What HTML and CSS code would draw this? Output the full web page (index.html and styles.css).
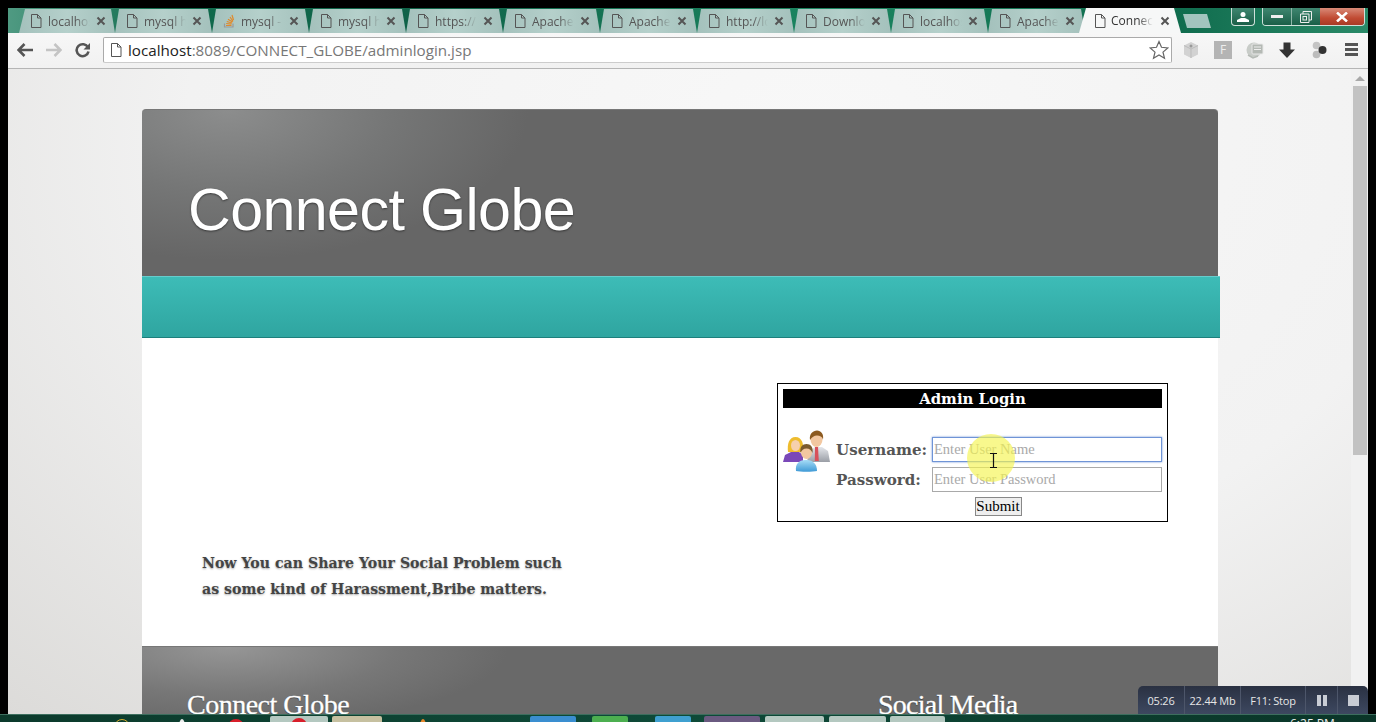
FILE: index.html
```html
<!DOCTYPE html>
<html lang="en">

<head>
    <meta charset="UTF-8">
    <title>Connect Globe</title>
    <link rel="stylesheet" href="styles.css">
</head>

<body>

    <svg class="defs" width="0" height="0">
        <symbol id="doc" viewBox="0 0 12 14">
            <path d="M1.500 .5h6l3.500 3.500v9.500h-9.500z M7.500 .5v3.500h3.500" fill="none" stroke="#555" stroke-width="1"/>
        </symbol>
        <symbol id="cross" viewBox="0 0 10 10">
            <path d="M1.500 1.500l7 7M8.500 1.500l-7 7" fill="none" stroke="#555" stroke-width="2"/>
        </symbol>
    </svg>

    <div class="screen">

        <!-- Browser tabs -->
        <div class="tab-strip">
            <div class="tab tab-first"><svg class="tab-icon"><use href="#doc"/></svg><span class="tab-title">localhos</span><svg class="tab-close"><use href="#cross"/></svg></div>
            <div class="tab"><svg class="tab-icon"><use href="#doc"/></svg><span class="tab-title">mysql h</span><svg class="tab-close"><use href="#cross"/></svg></div>
            <div class="tab">
                <svg class="tab-icon" viewBox="0 0 12 14"><path d="M1.500 9.500v3.500h8.500v-3.500" fill="none" stroke="#999" stroke-width="1.200"/><path d="M3 11.500h5.500M3.200 9.500l5.300.6M3.800 7.500l5.200 1.500M5 5.200l4.500 2.800M7 3l3 4.300M9 1l1.500 5" fill="none" stroke="#e08a2c" stroke-width="1.200"/></svg>
                <span class="tab-title">mysql -</span><svg class="tab-close"><use href="#cross"/></svg>
            </div>
            <div class="tab"><svg class="tab-icon"><use href="#doc"/></svg><span class="tab-title">mysql h</span><svg class="tab-close"><use href="#cross"/></svg></div>
            <div class="tab"><svg class="tab-icon"><use href="#doc"/></svg><span class="tab-title">https://</span><svg class="tab-close"><use href="#cross"/></svg></div>
            <div class="tab"><svg class="tab-icon"><use href="#doc"/></svg><span class="tab-title">Apache</span><svg class="tab-close"><use href="#cross"/></svg></div>
            <div class="tab"><svg class="tab-icon"><use href="#doc"/></svg><span class="tab-title">Apache</span><svg class="tab-close"><use href="#cross"/></svg></div>
            <div class="tab"><svg class="tab-icon"><use href="#doc"/></svg><span class="tab-title">http://lo</span><svg class="tab-close"><use href="#cross"/></svg></div>
            <div class="tab"><svg class="tab-icon"><use href="#doc"/></svg><span class="tab-title">Downlo</span><svg class="tab-close"><use href="#cross"/></svg></div>
            <div class="tab"><svg class="tab-icon"><use href="#doc"/></svg><span class="tab-title">localhos</span><svg class="tab-close"><use href="#cross"/></svg></div>
            <div class="tab"><svg class="tab-icon"><use href="#doc"/></svg><span class="tab-title">Apache</span><svg class="tab-close"><use href="#cross"/></svg></div>
            <div class="tab tab-active"><svg class="tab-icon"><use href="#doc"/></svg><span class="tab-title">Connect</span><svg class="tab-close"><use href="#cross"/></svg></div>
            <div class="new-tab"></div>

            <!-- Window buttons -->
            <div class="win-user">
                <svg width="12" height="10" viewBox="0 0 12 10"><circle cx="6" cy="2.500" r="2.500" fill="#fff"/><path d="M0 10v-2l4-2h4l4 2v2z" fill="#fff"/></svg>
            </div>
            <div class="win-group">
                <div class="win-btn win-min"><span class="min-bar"></span></div>
                <div class="win-btn win-max">
                    <svg width="12" height="12" viewBox="0 0 12 12"><path d="M3 3v-2.500h8.500v8.500h-2.500M.5 3h8.500v8.500h-8.500z" fill="none" stroke="#eee" stroke-width="1"/><rect x="3" y="5.500" width="3.500" height="3.500" fill="none" stroke="#eee"/></svg>
                </div>
                <div class="win-btn win-close">
                    <svg width="14" height="10" viewBox="0 0 14 10"><path d="M2 .5l10 9M12 .5l-10 9" stroke="#fff" stroke-width="2.500"/></svg>
                </div>
            </div>
        </div>

        <!-- Address bar -->
        <div class="toolbar">
            <svg class="nav-icon" viewBox="0 0 16 14"><path d="M7.500 1l-6 6 6 6M2 7h14" fill="none" stroke="#555" stroke-width="2.600"/></svg>
            <svg class="nav-icon" viewBox="0 0 16 14"><path d="M8.500 1l6 6-6 6M14 7h-14" fill="none" stroke="#c4c4c4" stroke-width="2.600"/></svg>
            <svg class="nav-icon" viewBox="0 0 16 16"><path d="M13 5.500a6 6 0 1 0 .5 4" fill="none" stroke="#555" stroke-width="2.600"/><path d="M15 1v6.500h-6.500z" fill="#555"/></svg>
            <div class="omnibox">
                <svg class="omni-doc"><use href="#doc"/></svg>
                <span class="url"><b class="url-host">localhost</b>:8089/CONNECT_GLOBE/adminlogin.jsp</span>
                <svg class="star" viewBox="0 0 20 20"><path d="M10 1.500l2.500 5.800 6.300.6-4.800 4.200 1.500 6.200-5.500-3.300-5.500 3.300 1.500-6.200-4.800-4.200 6.300-.6z" fill="#fff" stroke="#666" stroke-width="1.200"/></svg>
            </div>
            <div class="ext-row">
                <svg class="ext" viewBox="0 0 18 18"><path d="M9 1l7 3.500v9l-7 3.500-7-3.500v-9z" fill="#d2d2d2"/><path d="M2 4.500l7 3.500 7-3.500M9 8v9" fill="none" stroke="#bbb"/><circle cx="9" cy="5" r="1.500" fill="#999"/></svg>
                <span class="ext-f">F</span>
                <svg class="ext" viewBox="0 0 18 18"><circle cx="8" cy="9" r="7.500" fill="#c8ccc8"/><rect x="6" y="3" width="11" height="10" rx="1" fill="#b4b9b4" stroke="#e8e8e8"/><path d="M8 6h7M8 8.500h7" stroke="#eee"/><path d="M2 14l5 3 5-2" fill="none" stroke="#b5bab5" stroke-width="1.500"/></svg>
                <svg class="ext" viewBox="0 0 18 18"><path d="M5.500 1.500h7v7h4.500l-8 8.500-8-8.500h4.500z" fill="#333"/></svg>
                <svg class="ext" viewBox="0 0 18 18"><circle cx="6.500" cy="4.500" r="3.800" fill="#c4c4c4"/><circle cx="6.500" cy="13.500" r="3.800" fill="#bcbcbc"/><circle cx="12.500" cy="9" r="4" fill="#333"/></svg>
                <span class="menu-icon"><i></i><i></i><i></i></span>
            </div>
        </div>

        <!-- Page area -->
        <div class="viewport">
            <div class="page">
                <div class="card">
                    <div class="banner">
                        <h1 class="site-title">Connect Globe</h1>
                    </div>
                    <div class="teal-bar"></div>
                    <div class="content">
                        <div class="login-row">
                            <div class="login-box">
                                <div class="login-head">Admin Login</div>
                                <form class="login-form">
                                    <svg class="people" viewBox="0 0 48 42">
                                        <defs>
                                            <linearGradient id="suit" x1="0" y1="0" x2="0" y2="1"><stop offset="0" stop-color="#e4e6ea"/><stop offset="1" stop-color="#9a9ea6"/></linearGradient>
                                            <linearGradient id="kid" x1="0" y1="0" x2="0" y2="1"><stop offset="0" stop-color="#a6dcf6"/><stop offset="1" stop-color="#3f9ad6"/></linearGradient>
                                        </defs>
                                        <path d="M24 32l2-11 6-4h7l6 4 2 11z" fill="url(#suit)"/>
                                        <path d="M32 17h3l.8 14h-4z" fill="#d8505a"/>
                                        <ellipse cx="33.500" cy="9.500" rx="6" ry="7.500" fill="#f2c7a0"/>
                                        <path d="M27 10c-1-6 3-9.500 7-9.500s7 3.500 6 9c-1-3-3-4-6-4s-5 1.500-7 4.500z" fill="#8c5a20"/>
                                        <path d="M0 32l2-7 6-3h8l4 3v7z" fill="#7a48b8"/>
                                        <path d="M5 22c-1-8 1-15 7.500-15s8.500 7 7.500 15z" fill="#eebc2e"/>
                                        <ellipse cx="12.500" cy="15.500" rx="4.500" ry="5.500" fill="#f6d0ac"/>
                                        <path d="M13 41c-1-7 3-11 9-11h2c6 0 10 4 10 11-4 1-17 1-21 0z" fill="url(#kid)"/>
                                        <ellipse cx="23.500" cy="22.500" rx="5.500" ry="6.500" fill="#f2c7a0"/>
                                        <path d="M17.500 23c-1-6 2-9 6-9s7 3 6 9c-1-2.500-3-4.500-6-4.500s-5 2-6 4.500z" fill="#7c5c30"/>
                                    </svg>
                                    <div class="fields">
                                        <div class="field-row">
                                            <label class="field-label" for="username">Username:</label>
                                            <input class="field-input field-focus" id="username" type="text" placeholder="Enter User Name">
                                        </div>
                                        <div class="field-row">
                                            <label class="field-label" for="password">Password:</label>
                                            <input class="field-input" id="password" type="password" placeholder="Enter User Password">
                                        </div>
                                        <div class="submit-row">
                                            <button class="submit-btn" type="button">Submit</button>
                                        </div>
                                    </div>
                                </form>
                            </div>
                        </div>
                        <p class="tagline">Now You can Share Your Social Problem such<br>as some kind of Harassment,Bribe matters.</p>
                    </div>
                    <div class="footer">
                        <h2 class="footer-title">Connect Globe</h2>
                        <h2 class="footer-title footer-social">Social Media</h2>
                    </div>
                </div>
            </div>
            <div class="scrollbar">
                <span class="scroll-up"></span>
                <span class="scroll-thumb"></span>
            </div>
        </div>

        <!-- Windows taskbar, only its top edge is on screen -->
        <div class="taskbar">
            <span class="task-dot dot-yellow"></span>
            <span class="task-dot dot-white"></span>
            <span class="task-dot dot-red"></span>
            <span class="task-btn task-first"><span class="task-dot dot-red"></span></span>
            <span class="task-btn task-narrow"></span>
            <span class="task-dot dot-orange"></span>
            <span class="task-btn task-blue"></span>
            <span class="task-btn task-green"></span>
            <span class="task-btn task-sky"></span>
            <span class="task-btn task-purple"></span>
            <span class="task-btn task-grey1"></span>
            <span class="task-btn task-grey2"></span>
            <span class="task-btn task-grey3"></span>
            <span class="task-clock">6:25 PM</span>
        </div>

        <!-- Mouse pointer highlight of the screen recorder -->
        <span class="pointer-glow"></span>
        <svg class="pointer-beam" width="9" height="15" viewBox="0 0 9 15"><path d="M1 .5h7M4.500 .5v14M1 14.500h7" stroke="#111" stroke-width="1.200" fill="none"/></svg>

        <!-- Screen recorder panel -->
        <div class="recorder">
            <span class="rec-cell rec-time">05:26</span>
            <span class="rec-cell rec-size">22.44 Mb</span>
            <span class="rec-cell rec-key">F11: Stop</span>
            <span class="rec-cell rec-icon"><span class="rec-pause"></span></span>
            <span class="rec-cell rec-last"><span class="rec-stop"></span></span>
        </div>
    </div>
</body>

</html>
```

FILE: styles.css
```css
html, body {
    margin: 0;
    padding: 0;
    height: 100%;
    overflow: hidden;
    background: #000;
}

.defs {
    position: absolute;
}

.screen {
    position: relative;
    display: flex;
    flex-direction: column;
    height: 722px;
    padding: 8px 8px 0 8px;
    box-sizing: border-box;
    font-family: "Open Sans", "Liberation Sans", sans-serif;
}

/* Tabs */
.tab-strip {
    display: flex;
    align-items: flex-end;
    height: 25px;
    padding-left: 11px;
    background: linear-gradient(90deg, #4f9a82 0%, #0f6a4c 12%, #0f6248 30%, #1b8560 60%, #0e6a4c 85%, #2a8a68 100%);
    flex: none;
}

.tab {
    display: flex;
    align-items: center;
    width: 97px;
    height: 24px;
    flex: none;
    box-sizing: border-box;
    padding-left: 11px;
    clip-path: polygon(0 100%, 4px 0, 93px 0, 97px 100%);
    background: linear-gradient(90deg, #a4c1bc, #b5d0cb 50%, #a4c1bc);
}

.tab-first {
    width: 96px;
    clip-path: polygon(0 100%, 6px 0, 92px 0, 96px 100%);
}

.tab-icon {
    width: 12px;
    height: 14px;
    flex: none;
}

.tab-title {
    width: 44px;
    margin-left: 6px;
    white-space: nowrap;
    font-size: 12px;
    color: #555;
    -webkit-mask-image: linear-gradient(90deg, #000 62%, transparent 95%);
    mask-image: linear-gradient(90deg, #000 62%, transparent 95%);
}

.tab-close {
    width: 10px;
    height: 10px;
    margin-left: 4px;
    flex: none;
}

.tab-active {
    position: relative;
    width: 102px;
    height: 25px;
    margin-left: -6px;
    padding-left: 15px;
    clip-path: polygon(0 100%, 7px 0, 95px 0, 102px 100%);
    background: #f6f7f7;
}

.tab-active .tab-title {
    margin-left: 5px;
    color: #333;
}

.tab-active .tab-close {
    margin-left: 5px;
}

.new-tab {
    width: 28px;
    height: 14px;
    margin: 0 20px 5px 2px;
    flex: none;
    clip-path: polygon(0 0, 24px 0, 28px 100%, 4px 100%);
    background: #a3c4be;
}

.win-user {
    display: flex;
    align-items: center;
    justify-content: center;
    align-self: flex-start;
    width: 24px;
    height: 18px;
    margin-right: 7px;
    border: 1px solid #cfe0da;
    border-top: 0;
    border-radius: 0 0 4px 4px;
    box-sizing: border-box;
    background: linear-gradient(#3f8670, #1a5f48);
}

.win-group {
    display: flex;
    align-self: flex-start;
    width: 103px;
    height: 18px;
    border: 1px solid #cfe0da;
    border-top: 0;
    border-radius: 0 0 4px 4px;
    box-sizing: border-box;
    overflow: hidden;
}

.win-btn {
    display: flex;
    align-items: center;
    justify-content: center;
    width: 28px;
    flex: none;
    background: linear-gradient(#3f8670, #1a5f48);
}

.win-min {
    border-right: 1px solid #8fb8aa;
}

.win-close {
    flex: 1;
    background: linear-gradient(#d98a78, #c04a32 60%, #a83a26);
}

.min-bar {
    width: 12px;
    height: 3px;
    background: #eee;
}

/* Address bar */
.toolbar {
    display: flex;
    align-items: center;
    flex: none;
    height: 36px;
    padding: 0 0 2px 9px;
    box-sizing: border-box;
    background: linear-gradient(#f7f7f7, #f1f1f1);
    border-bottom: 1px solid #b5b5b5;
}

.nav-icon {
    width: 16px;
    height: 16px;
    margin-right: 13px;
    flex: none;
}

.omnibox {
    display: flex;
    align-items: center;
    width: 1069px;
    height: 26px;
    margin-left: -1px;
    padding: 0 2px 0 6px;
    box-sizing: border-box;
    flex: none;
    background: #fff;
    border: 1px solid #aaa;
    border-bottom-color: #ccc;
    border-radius: 2px;
}

.omni-doc {
    width: 12px;
    height: 14px;
    flex: none;
}

.url {
    margin-left: 6px;
    flex: 1;
    font-size: 15.200px;
    color: #777;
    white-space: nowrap;
}

.url-host {
    font-weight: normal;
    color: #222;
}

.star {
    width: 20px;
    height: 20px;
    flex: none;
}

.ext-row {
    display: flex;
    align-items: center;
    gap: 14px;
    margin-left: 10px;
}

.ext {
    width: 18px;
    height: 18px;
    flex: none;
}

.ext-f {
    display: flex;
    align-items: center;
    justify-content: center;
    width: 18px;
    height: 18px;
    background: #b4b4b4;
    color: #eee;
    font-size: 12px;
    flex: none;
}

.menu-icon {
    display: flex;
    flex-direction: column;
    gap: 2px;
    width: 13px;
    margin-left: 3px;
}

.menu-icon i {
    display: block;
    height: 3px;
    background: #555;
}

/* Page */
.viewport {
    display: flex;
    flex: 1;
    min-height: 0;
    overflow: hidden;
}

.page {
    flex: 1;
    padding: 40px 0 0 134px;
    overflow: hidden;
    background: radial-gradient(ellipse at 60% 10%, #f8f8f8 0%, #f2f2f2 55%, #dcdbd9 100%);
}

.card {
    width: 1076px;
}

.banner {
    display: flex;
    align-items: center;
    height: 167px;
    padding: 32px 0 0 46px;
    box-sizing: border-box;
    border-radius: 4px 4px 0 0;
    background: radial-gradient(ellipse 300px 150px at 8% 0%, #8c8d8d 0%, #757676 55%, #666 100%);
    border-top: 1px solid #777;
}

.site-title {
    margin: 0;
    font-family: "Liberation Sans", Arial, sans-serif;
    font-weight: normal;
    font-size: 59.200px;
    letter-spacing: -.6px;
    color: #fff;
    text-shadow: 0 1px 2px rgba(0, 0, 0, .5);
}

.teal-bar {
    width: 1078px;
    height: 62px;
    box-sizing: border-box;
    background: linear-gradient(#3dbcb7, #2fa5a0);
    border-top: 1px solid #6cc;
    border-bottom: 1px solid #1d7f7c;
}

.content {
    height: 308px;
    box-sizing: border-box;
    padding-top: 45px;
    background: #fff;
}

.login-row {
    display: flex;
    justify-content: flex-end;
    padding-right: 50px;
}

.login-box {
    width: 391px;
    height: 139px;
    box-sizing: border-box;
    padding: 5px;
    border: 1px solid #000;
    font-family: "Liberation Serif", serif;
}

.login-head {
    height: 19px;
    line-height: 20px;
    background: #000;
    color: #fff;
    font-family: "DejaVu Serif", serif;
    font-weight: bold;
    font-size: 14.900px;
    text-align: center;
}

.login-form {
    display: flex;
    margin-top: 23px;
}

.people {
    width: 48px;
    height: 42px;
    margin-top: -1px;
    flex: none;
}

.fields {
    flex: 1;
    margin-left: 5px;
    margin-top: 6px;
}

.field-row {
    display: flex;
    align-items: center;
    height: 25px;
    margin-bottom: 5px;
}

.field-label {
    width: 96px;
    flex: none;
    font-family: "DejaVu Serif", serif;
    font-weight: bold;
    font-size: 15.100px;
    color: #555;
}

.field-input {
    width: 230px;
    height: 25px;
    padding: 0 1px;
    box-sizing: border-box;
    border: 1px solid #a9a9a9;
    outline: none;
    font-family: "Liberation Serif", serif;
    font-size: 14.500px;
}

.field-input::placeholder {
    color: #a9a9a9;
}

.field-focus {
    border: 1px solid #6f94d6;
    box-shadow: 0 0 2px #6f94d6;
}

.submit-row {
    display: flex;
    justify-content: center;
    padding-right: 2px;
}

.submit-btn {
    height: 19px;
    width: 47px;
    padding: 0;
    border: 1px solid #888;
    background: #eee;
    color: #000;
    font-family: "Liberation Serif", serif;
    font-size: 15px;
    line-height: 15px;
}

.tagline {
    margin: 28px 0 0 60px;
    font-family: "DejaVu Serif", serif;
    font-weight: bold;
    font-size: 14.150px;
    line-height: 26px;
    color: #444;
    text-shadow: 0 1px 2px rgba(0, 0, 0, .35);
}

.footer {
    display: flex;
    height: 100px;
    padding: 42px 0 0 45px;
    box-sizing: border-box;
    border-top: 1px solid #777;
    background: radial-gradient(ellipse 280px 80px at 8% 0%, #969696 0%, #777 60%, #696969 100%);
}

.footer-title {
    width: 691px;
    flex: none;
    margin: 0;
    font-family: "Liberation Serif", serif;
    font-weight: normal;
    font-size: 28px;
    letter-spacing: -.5px;
    color: #fff;
    -webkit-text-stroke: .3px #fff;
    text-shadow: 0 1px 1px rgba(0, 0, 0, .4);
}

.footer-social {
    width: 300px;
    letter-spacing: -.75px;
}

.scrollbar {
    display: flex;
    flex-direction: column;
    align-items: center;
    width: 17px;
    flex: none;
    background: #f1f1f1;
}

.scroll-up {
    width: 0;
    height: 0;
    margin: 7px 0 5px;
    border-left: 5px solid transparent;
    border-right: 5px solid transparent;
    border-bottom: 5px solid #a8a8a8;
}

.scroll-thumb {
    width: 14px;
    height: 369px;
    background: #c2c2c2;
}

/* Taskbar */
.taskbar {
    position: relative;
    display: flex;
    flex: none;
    height: 8px;
    margin: 0 -8px;
    overflow: hidden;
    background: linear-gradient(90deg, #0c3a2c, #0e4a38 50%, #0a3528);
    border-top: 1px solid #3d6e5e;
    box-sizing: border-box;
}

.task-btn {
    position: absolute;
    top: 1px;
    display: block;
    height: 10px;
    background: #b4c8c0;
    border-radius: 2px 2px 0 0;
}

.task-first { left: 270px; width: 58px; }
.task-narrow { left: 332px; width: 50px; background: #c6c0a0; }
.task-blue { left: 530px; width: 46px; background: #3a8ed0; }
.task-green { left: 592px; width: 36px; background: #4caf50; }
.task-sky { left: 655px; width: 36px; background: #3fa0d0; }
.task-purple { left: 704px; width: 56px; background: #6a5a80; }
.task-grey1 { left: 765px; width: 59px; }
.task-grey2 { left: 829px; width: 57px; }
.task-grey3 { left: 890px; width: 55px; }

.task-dot {
    position: absolute;
    top: 4px;
    width: 16px;
    height: 16px;
    border-radius: 50%;
}

.dot-yellow { left: 114px; border: 1px solid #d8b030; box-sizing: border-box; }
.dot-white { left: 179px; width: 6px; background: #eee; }
.dot-red { left: 228px; background: #d81e2a; }
.task-first .dot-red { left: 21px; top: 2px; }
.dot-orange { left: 420px; width: 6px; background: #e8862a; }

.task-clock {
    position: absolute;
    top: 2px;
    left: 1290px;
    font-size: 12px;
    line-height: 14px;
    color: #eee;
}

/* Things on top of the page */
.pointer-glow {
    position: absolute;
    left: 967px;
    top: 434px;
    width: 48px;
    height: 48px;
    border-radius: 50%;
    background: rgba(244, 244, 80, .65);
}

.pointer-beam {
    position: absolute;
    left: 989px;
    top: 453px;
}

.recorder {
    position: absolute;
    right: 8px;
    top: 686px;
    display: flex;
    align-items: center;
    width: 230px;
    height: 28px;
    border-radius: 5px 5px 0 0;
    background: linear-gradient(#2a3142, #3d4860);
    color: #e6e6e6;
    font-size: 11px;
    letter-spacing: -.2px;
}

.rec-cell {
    display: flex;
    align-items: center;
    justify-content: center;
    height: 100%;
    border-right: 1px solid #4d566a;
    box-sizing: border-box;
    white-space: nowrap;
}

.rec-time { width: 47px; }
.rec-size { width: 56px; }
.rec-key { width: 65px; }
.rec-icon { width: 32px; }

.rec-last {
    flex: 1;
    border-right: 0;
}

.rec-pause {
    width: 10px;
    height: 11px;
    background: linear-gradient(90deg, #c8ccd4 40%, transparent 40%, transparent 60%, #c8ccd4 60%);
}

.rec-stop {
    width: 11px;
    height: 11px;
    background: #c8ccd4;
}
```
